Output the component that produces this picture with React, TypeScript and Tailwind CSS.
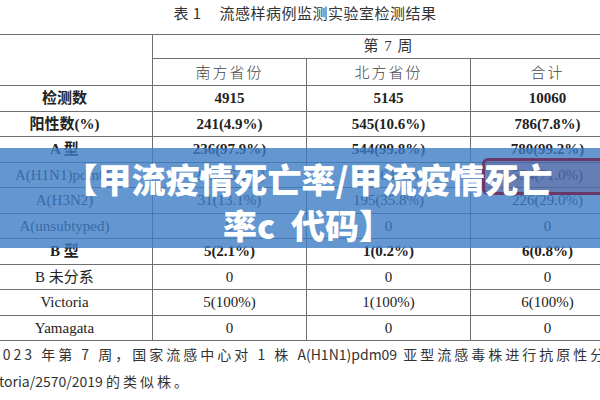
const rows = [
  { label: "检测数", vals: ["4915", "5145", "10060"], bold: true },
  { label: "阳性数(%)", vals: ["241(4.9%)", "545(10.6%)", "786(7.8%)"], bold: true },
  { label: "A 型", vals: ["236(97.9%)", "544(99.8%)", "780(99.2%)"], bold: true },
  { label: "A(H1N1)pdm09", vals: ["205(86.9%)", "349(64.2%)", "554(71.0%)"], bold: false },
  { label: "A(H3N2)", vals: ["31(13.1%)", "195(35.8%)", "226(29.0%)"], bold: false },
  { label: "A(unsubtyped)", vals: ["0", "0", "0"], bold: false },
  { label: "B 型", vals: ["5(2.1%)", "1(0.2%)", "6(0.8%)"], bold: true },
  { label: "B 未分系", vals: ["0", "0", "0"], bold: false },
  { label: "Victoria", vals: ["5(100%)", "1(100%)", "6(100%)"], bold: false },
  { label: "Yamagata", vals: ["0", "0", "0"], bold: false },
];

const cell = "border border-[#707070] text-center p-0";

export default function App() {
  return (
    <div className="relative w-[600px] h-[400px] overflow-hidden bg-white text-[#222]">
      {/* title */}
      <div className="h-[34px] pb-[8px] pl-[10px] flex items-center justify-center text-[15px] tracking-[0.5px] text-[#333] font-['Noto_Sans_CJK_SC',sans-serif]">
        <span>表 1</span>
        <span className="ml-[18px]">流感样病例监测实验室检测结果</span>
      </div>

      {/* table */}
      <table className="-ml-[24px] w-[648px] table-fixed border-collapse text-[15px] font-['Liberation_Serif','Noto_Sans_CJK_SC',serif]">
        <colgroup>
          <col className="w-[176px]" />
          <col className="w-[154px]" />
          <col className="w-[164px]" />
          <col className="w-[154px]" />
        </colgroup>
        <thead>
          <tr className="h-[24px]">
            <th rowSpan={2} className={cell}></th>
            <th colSpan={3} className={`${cell} font-normal text-[#333] tracking-[1px]`}>第 7 周</th>
          </tr>
          <tr className="h-[27px]">
            {["南方省份", "北方省份", "合计"].map((h) => (
              <th key={h} className={`${cell} font-light text-[#444] tracking-[2px] font-['Noto_Sans_CJK_SC',sans-serif]`}>
                {h}
              </th>
            ))}
          </tr>
        </thead>
        <tbody>
          {rows.map((r) => (
            <tr key={r.label} className="h-[25.5px]">
              <td className={`${cell} ${r.bold ? "font-bold" : ""}`}>{r.label}</td>
              {r.vals.map((v, i) => (
                <td key={i} className={`${cell} ${r.bold ? "font-bold" : ""}`}>{v}</td>
              ))}
            </tr>
          ))}
        </tbody>
      </table>

      {/* note below table */}
      <div className="text-[14px] leading-[27px] text-[#333] whitespace-nowrap font-['Noto_Sans_CJK_SC',sans-serif]">
        <div className="-ml-[8px] tracking-[3px]">
          2023 年第 7 周，国家流感中心对 1 株 <span className="tracking-normal">A(H1N1)pdm09</span> 亚型流感毒株进行抗原性分
        </div>
        <div className="-ml-[1px]">
          toria/2570/2019 <span className="tracking-[3px]">的类似株。</span>
        </div>
      </div>

      {/* overlay banner */}
      <div className="absolute left-0 top-[148px] w-[600px] h-[100px] bg-[#3d7cc4]/80 flex items-center justify-center pt-[8px] pl-[16px]">
        <div className="absolute left-[482px] top-[10px] w-[130px] h-[37px] rounded-md border-[3px] border-[#6a3868] bg-[#6a3868]/25" />
        <div className="relative w-[500px] text-center text-white text-[34px] leading-[46px] font-black whitespace-pre-wrap font-['Noto_Sans_CJK_SC',sans-serif]">
          {"【甲流疫情死亡率/甲流疫情死亡率c  代码】"}
        </div>
      </div>
    </div>
  );
}
